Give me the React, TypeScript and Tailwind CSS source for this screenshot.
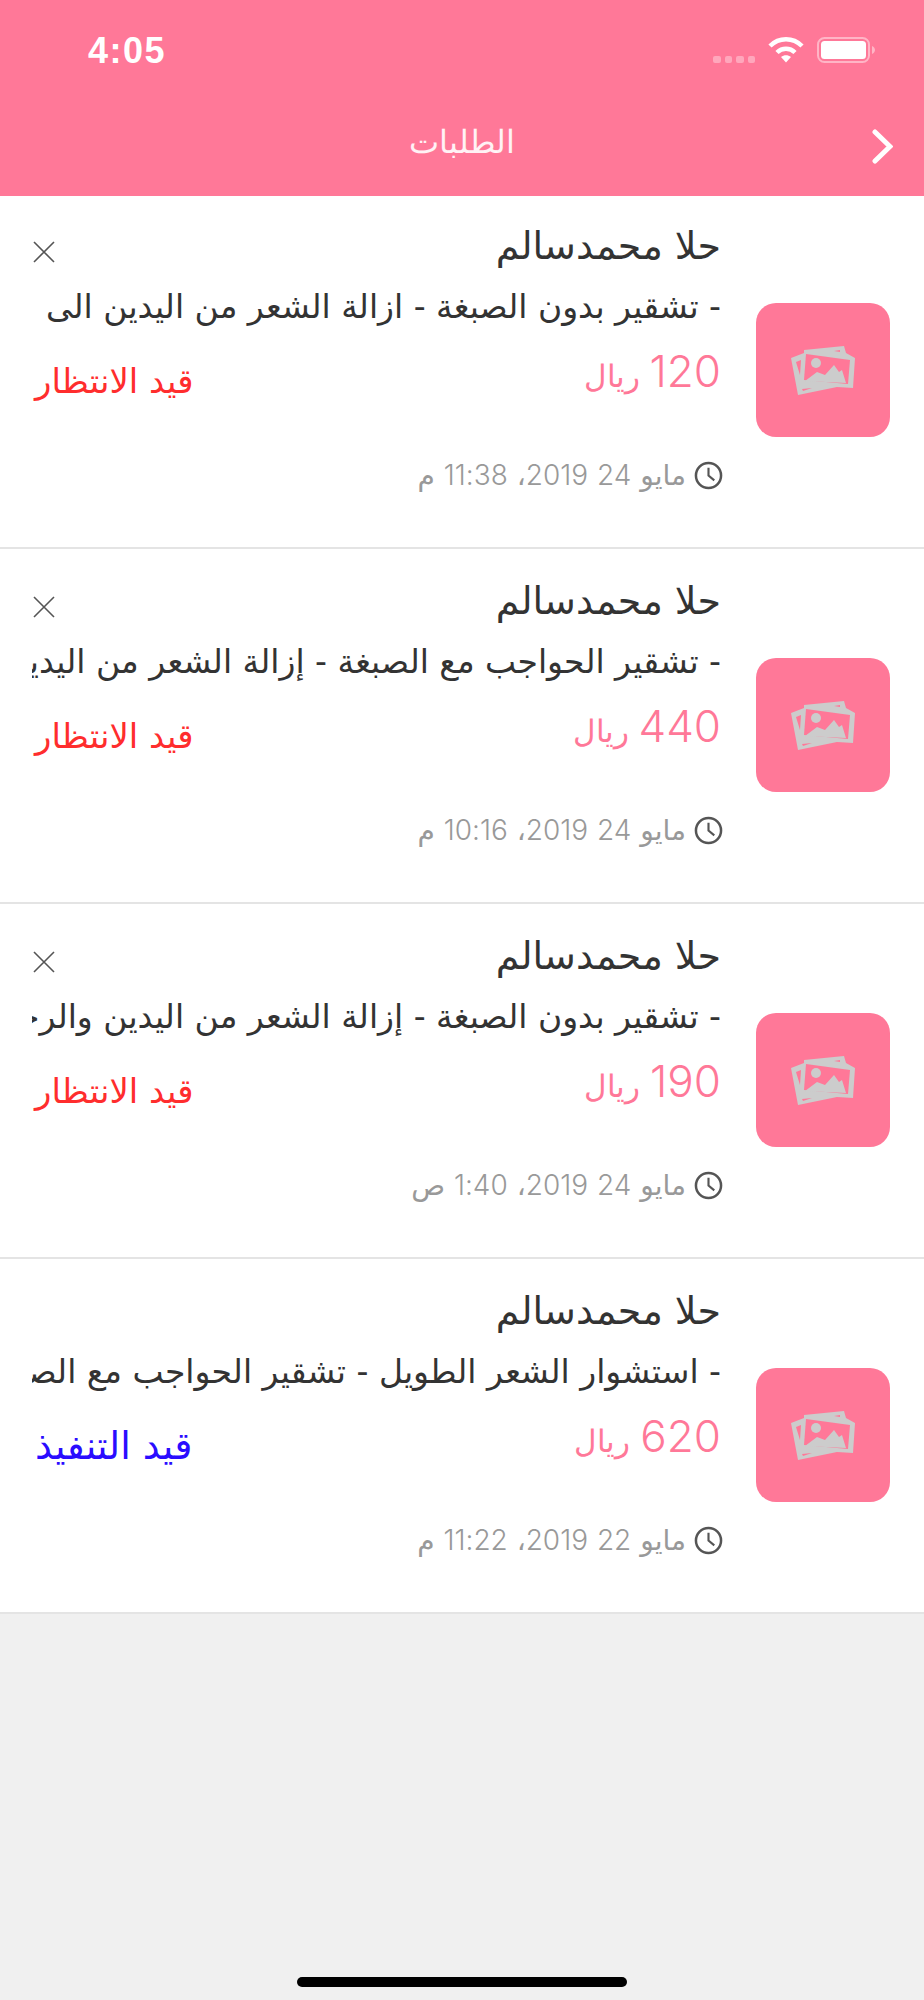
const orders = [
  { desc: "- تشقير بدون الصبغة - ازالة الشعر من اليدين الى", price: "120", status: "قيد الانتظار", blue: false, date: "مايو 24 2019، 11:38 م", x: true },
  { desc: "- تشقير الحواجب مع الصبغة - إزالة الشعر من اليدين الى", price: "440", status: "قيد الانتظار", blue: false, date: "مايو 24 2019، 10:16 م", x: true },
  { desc: "- تشقير بدون الصبغة - إزالة الشعر من اليدين والرجلين", price: "190", status: "قيد الانتظار", blue: false, date: "مايو 24 2019، 1:40 ص", x: true },
  { desc: "- استشوار الشعر الطويل - تشقير الحواجب مع الصبغة", price: "620", status: "قيد التنفيذ", blue: true, date: "مايو 22 2019، 11:22 م", x: false },
];

function Wifi() {
  return (
    <svg width="36" height="26" viewBox="0 0 36 26" fill="none" stroke="white" strokeWidth="4.5">
      <path d="M2 9 C11 0 25 0 34 9" />
      <path d="M9 15.5 C14 10.5 22 10.5 27 15.5" />
      <path d="M18 25.5 L13 20 C16 17.5 20 17.5 23 20 Z" fill="white" stroke="none" />
    </svg>
  );
}

function Battery() {
  return (
    <svg width="59" height="26" viewBox="0 0 59 26" fill="none">
      <rect x="1" y="1" width="51" height="24" rx="6.5" stroke="white" strokeOpacity="0.45" strokeWidth="2" />
      <rect x="4" y="4" width="45" height="18" rx="3.5" fill="white" />
      <path d="M55 9 C57 10 58 11.5 58 13 C58 14.5 57 16 55 17 Z" fill="white" fillOpacity="0.45" />
    </svg>
  );
}

function PhotoIcon() {
  return (
    <svg width="72" height="60" viewBox="0 0 72 60">
      <path d="M4 18 L17 13 L17 10 L57 6 L59 13 L68 18 L66 48 L50 47 L11 55 Z" fill="#cccccc" />
      <path d="M19 14 L63 20 L61 44 L17 40 Z" fill="#ff7898" />
      <path d="M9 22 L14 20 L13 35 Z M15 49 L25 48 L16 51 Z M47 11 L53 10 L53 12 Z" fill="#ff7898" />
      <circle cx="29" cy="23" r="5" fill="#cccccc" />
      <path d="M18 41 L30 32 L38 35 L47 25 L52 32 L55 30 L59 43 Z" fill="#cccccc" />
    </svg>
  );
}

function Digits({ text }: { text: string }) {
  return (
    <>
      {text.split(/([\d:]+)/).map((part, i) =>
        i % 2 === 1 ? (
          <span key={i} className="font-['Inter',sans-serif] font-light tracking-[-1.7px]">{part}</span>
        ) : (
          <span key={i}>{part}</span>
        )
      )}
    </>
  );
}

export default function App() {
  return (
    <div className="flex h-[2000px] w-[924px] flex-col overflow-hidden bg-[#f0f0f0] font-['Liberation_Sans','DejaVu_Sans',sans-serif]">
      <header className="relative z-10 flex h-[196px] flex-col bg-[#ff7898] text-white">
        <div className="flex h-[100px] items-start justify-between pl-[88px] pr-[48px] pt-[30px]">
          <span className="text-[36px] font-bold leading-[42px] tracking-[1.5px]">4:05</span>
          <div className="flex items-start pt-[7px]">
            <div className="mr-[13px] mt-[19px] flex gap-[4px]">
              <span className="h-[7px] w-[7.5px] rounded-[2px] bg-white/35" />
              <span className="h-[7px] w-[7.5px] rounded-[2px] bg-white/35" />
              <span className="h-[7px] w-[7.5px] rounded-[2px] bg-white/35" />
              <span className="h-[7px] w-[7.5px] rounded-[2px] bg-white/35" />
            </div>
            <Wifi />
            <div className="ml-[13px]"><Battery /></div>
          </div>
        </div>
        <div className="flex flex-1 items-start pt-[20px] pr-[31px]">
          <span dir="rtl" className="ml-[409px] mr-auto font-['DejaVu_Sans',sans-serif] text-[32px] font-extralight leading-[44px] text-white/90">الطلبات</span>
          <svg className="mt-[9px]" width="21" height="35" viewBox="0 0 21 35" fill="none" stroke="white" strokeWidth="5" strokeLinecap="round">
            <path d="M3 3 L18 17.5 L3 32" />
          </svg>
        </div>
      </header>
      <main dir="rtl" className="-mt-[2px]">
        {orders.map((o, i) => (
          <section key={i} className="flex h-[355px] items-start border-b-2 border-[#e4e4e4] bg-white pr-[34px]">
            <div className="mt-[109px] flex h-[134px] w-[134px] shrink-0 items-center justify-center rounded-[20px] bg-[#ff7898]">
              <PhotoIcon />
            </div>
            <div className="ml-[32px] mr-[35px] flex min-w-0 flex-1 flex-col pt-[27px] font-['DejaVu_Sans',sans-serif]">
              <div className="flex h-[50px] items-center justify-between">
                <h2 className="text-[38px] font-normal leading-[50px] text-[#333333]">حلا محمدسالم</h2>
                {o.x && (
                  <svg className="ml-[1px] mt-[12px]" width="22" height="22" viewBox="0 0 22 22" stroke="#555555" strokeWidth="1.6">
                    <path d="M1 1 L21 21 M21 1 L1 21" />
                  </svg>
                )}
              </div>
              <p className="mt-[13px] overflow-hidden whitespace-nowrap text-[33px] leading-[46px] text-[#333333]">{o.desc}</p>
              <div className="mt-[16px] flex h-[52px] items-center justify-between">
                <span className="text-[#ff7898]">
                  <span className="font-['Inter',sans-serif] text-[44px] font-light leading-[52px] tracking-[-3.5px]">{o.price}</span>
                  <span className="text-[31px] font-extralight"> ريال</span>
                </span>
                <span className={`ml-[3px] mt-[18px] leading-[50px] ${o.blue ? "text-[38px] text-[#2a0cff]" : "text-[34px] text-[#ff2d2d]"}`}>{o.status}</span>
              </div>
              <div className="-mr-[2px] mt-[59px] flex items-center gap-[8px] text-[#999999]">
                <svg width="29" height="29" viewBox="0 0 30 30" fill="none" stroke="#555555" strokeWidth="2.6">
                  <circle cx="15" cy="15" r="13" />
                  <path d="M15 7 V15 L21 20" strokeWidth="2.2" />
                </svg>
                <span className="text-[28px] leading-[36px]"><Digits text={o.date} /></span>
              </div>
            </div>
          </section>
        ))}
      </main>
      <div className="flex flex-1 items-end justify-center pb-[13px]">
        <div className="h-[10px] w-[330px] rounded-full bg-black" />
      </div>
    </div>
  );
}
